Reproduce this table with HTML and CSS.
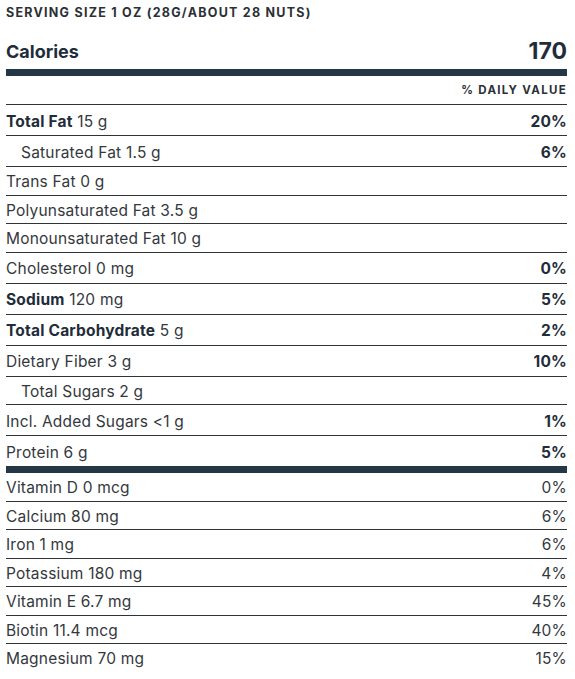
FILE: index.html
```html
<!DOCTYPE html>
<html lang="en">
<head>
    <meta charset="UTF-8">
    <meta name="viewport" content="width=device-width, initial-scale=1.0">
    <title>Nutrition Facts</title>
    <link rel="stylesheet" href="styles.css">
</head>
<body>
    <div class="facts">
        <div class="serving">Serving size 1 oz (28g/about 28 nuts)</div>

        <div class="calories">
            <span class="cal-label">Calories</span>
            <span class="cal-value">170</span>
        </div>

        <div class="dv-head">% Daily Value</div>

        <div class="row tall"><span><b>Total Fat</b> 15 g</span><span class="dv">20%</span></div>
        <div class="row tall indent"><span>Saturated Fat 1.5 g</span><span class="dv">6%</span></div>
        <div class="row"><span>Trans Fat 0 g</span></div>
        <div class="row"><span>Polyunsaturated Fat 3.5 g</span></div>
        <div class="row"><span>Monounsaturated Fat 10 g</span></div>
        <div class="row tall"><span>Cholesterol 0 mg</span><span class="dv">0%</span></div>
        <div class="row tall"><span><b>Sodium</b> 120 mg</span><span class="dv">5%</span></div>
        <div class="row tall"><span><b>Total Carbohydrate</b> 5 g</span><span class="dv">2%</span></div>
        <div class="row tall"><span>Dietary Fiber 3 g</span><span class="dv">10%</span></div>
        <div class="row indent"><span>Total Sugars 2 g</span></div>
        <div class="row tall"><span>Incl. Added Sugars &lt;1 g</span><span class="dv">1%</span></div>
        <div class="row tall thick"><span>Protein 6 g</span><span class="dv">5%</span></div>

        <div class="row"><span>Vitamin D 0 mcg</span><span class="dv light">0%</span></div>
        <div class="row"><span>Calcium 80 mg</span><span class="dv light">6%</span></div>
        <div class="row"><span>Iron 1 mg</span><span class="dv light">6%</span></div>
        <div class="row"><span>Potassium 180 mg</span><span class="dv light">4%</span></div>
        <div class="row"><span>Vitamin E 6.7 mg</span><span class="dv light">45%</span></div>
        <div class="row"><span>Biotin 11.4 mcg</span><span class="dv light">40%</span></div>
        <div class="row last"><span>Magnesium 70 mg</span><span class="dv light">15%</span></div>
    </div>
</body>
</html>
```

FILE: styles.css
```css
body {
    margin: 0;
    background: #ffffff;
    font-family: 'Inter', 'Liberation Sans', sans-serif;
    color: #34383c;
}

.facts {
    width: 561px;
    margin-left: 6px;
}

.serving {
    padding-top: 5px;
    line-height: 16px;
    font-size: 12.5px;
    font-weight: 700;
    letter-spacing: 1.25px;
    text-transform: uppercase;
    color: #2b3036;
}

.calories {
    display: flex;
    justify-content: space-between;
    align-items: center;
    height: 36px;
    padding-top: 12px;
    border-bottom: 7px solid #243746;
    color: #1f2d3a;
}

.cal-label {
    font-size: 18px;
    font-weight: 700;
}

.cal-value {
    font-size: 23px;
    font-weight: 700;
}

.dv-head {
    height: 28px;
    line-height: 29px;
    text-align: right;
    font-size: 11.5px;
    font-weight: 700;
    letter-spacing: 1.3px;
    text-transform: uppercase;
    border-bottom: 1px solid #2f3439;
    color: #2b3036;
}

.row {
    display: flex;
    justify-content: space-between;
    align-items: center;
    height: 25.5px;
    padding-top: 2px;
    font-size: 15.5px;
    letter-spacing: 0.2px;
    border-bottom: 1px solid #2f3439;
}

.row.tall {
    height: 28px;
}

.row.indent span:first-child {
    padding-left: 15px;
}

.row.thick {
    border-bottom: 7px solid #243746;
}

.row.last {
    border-bottom: none;
}

.row b {
    font-weight: 700;
    color: #1f2d3a;
}

.dv {
    font-weight: 700;
    color: #1f2d3a;
}

.dv.light {
    font-weight: 400;
    color: #34383c;
}
```
